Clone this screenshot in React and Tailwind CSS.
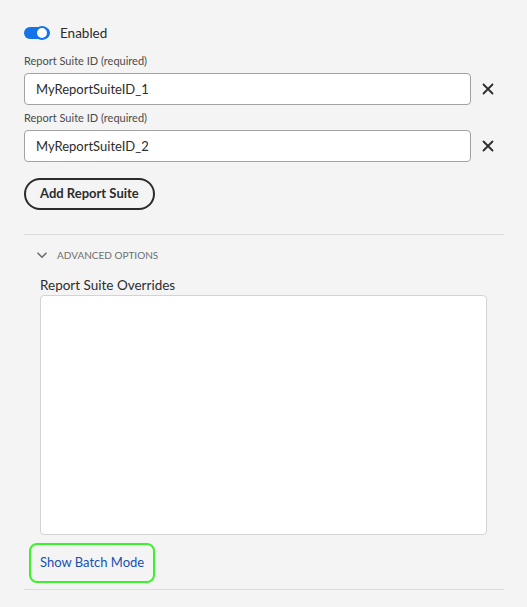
import { useState } from "react";

function CrossIcon() {
  return (
    <svg width="12" height="12" viewBox="0 0 12 12" fill="none">
      <path d="M1.5 1.5L10.5 10.5M10.5 1.5L1.5 10.5" stroke="#2c2c2c" strokeWidth="1.8" strokeLinecap="round" />
    </svg>
  );
}

function ChevronDown() {
  return (
    <svg width="10" height="7" viewBox="0 0 10 7" fill="none">
      <path d="M1 1.2L5 5.2L9 1.2" stroke="#6e6e6e" strokeWidth="1.6" strokeLinecap="round" strokeLinejoin="round" />
    </svg>
  );
}

function SuiteField({ value }) {
  return (
    <div>
      <div className="h-[16px] flex items-center text-[11px] text-[#4b4b4b]">Report Suite ID (required)</div>
      <div className="flex items-center mt-[4px]">
        <input
          readOnly
          value={value}
          className="flex-1 h-[32px] rounded-[4px] border border-[#a2a2a2] bg-white px-[11px] text-[13px] text-[#2c2c2c] outline-none"
        />
        <button className="w-[33px] h-[32px] flex items-center justify-center">
          <CrossIcon />
        </button>
      </div>
    </div>
  );
}

export default function App() {
  const [enabled, setEnabled] = useState(true);
  const suites = ["MyReportSuiteID_1", "MyReportSuiteID_2"];

  return (
    <div className="min-h-screen w-full bg-[#f4f4f4] pl-[24px] pr-[23px] pt-[24px] text-[#2c2c2c]" style={{ fontFamily: "Lato, 'Noto Sans', sans-serif" }}>
      <div className="h-[18px] flex items-center gap-[10px]">
        <button
          onClick={() => setEnabled(!enabled)}
          className="relative w-[26px] h-[12px] rounded-full bg-[#1473e6]"
        >
          <span className="absolute right-[1px] top-[-1px] w-[14px] h-[14px] rounded-full bg-white border-2 border-[#1473e6]" />
        </button>
        <span className="text-[13.5px]">Enabled</span>
      </div>

      <div className="mt-[11px]">
        <SuiteField value={suites[0]} />
      </div>
      <div className="mt-[5px]">
        <SuiteField value={suites[1]} />
      </div>

      <button className="mt-[16px] h-[32px] px-[14px] rounded-full border-2 border-[#2c2c2c] text-[13px] font-bold">
        Add Report Suite
      </button>

      <div className="mt-[24px] border-t border-[#dedede]" />

      <div className="pl-[16px] pr-[17px]">
        <div className="mt-[10px] h-[20px] flex items-center gap-[10px] ml-[-3px]">
          <ChevronDown />
          <span className="text-[10px] text-[#6e6e6e]">ADVANCED OPTIONS</span>
        </div>
        <div className="mt-[10px] h-[20px] flex items-center text-[13.5px]">Report Suite Overrides</div>
        <textarea
          readOnly
          className="block w-full h-[240px] rounded-[4px] border border-[#d3d3d3] bg-white resize-none outline-none"
        />
      </div>

      <div className="mt-[8px] ml-[5px] inline-flex h-[40px] items-center rounded-[8px] border-2 border-[#3cf02d] px-[9px]">
        <span className="text-[13px] text-[#1650b4]">Show Batch Mode</span>
      </div>

      <div className="mt-[6px] border-t border-[#dedede]" />
    </div>
  );
}
